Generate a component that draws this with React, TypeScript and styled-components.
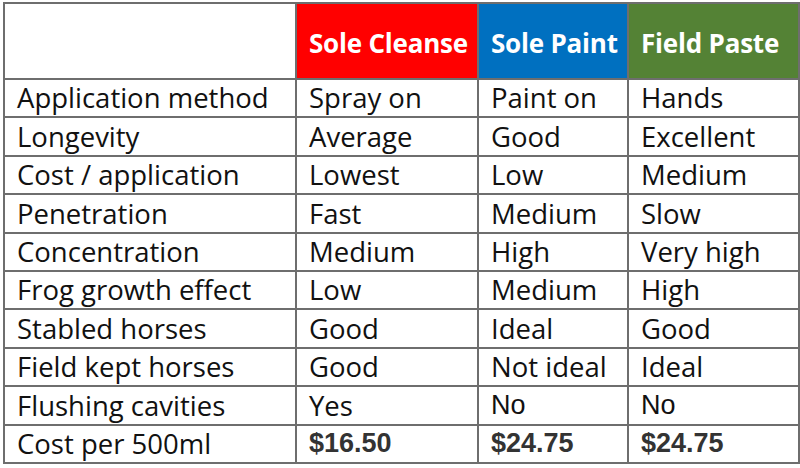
import React from "react";
import styled, { createGlobalStyle } from "styled-components";

const Global = createGlobalStyle`
  html, body { margin: 0; padding: 0; background: #ffffff; }
  body { font-family: "Open Sans", "Liberation Sans", sans-serif; }
`;

const Page = styled.div`
  padding: 2px 0 0 3px;
  width: 800px;
  height: 468px;
  box-sizing: border-box;
  background: #fff;
`;

const Table = styled.table`
  border-collapse: collapse;
  table-layout: fixed;
  width: 795px;
  border: 2px solid #6e6e6e;
`;

const Col = styled.col<{ $w: number }>`
  width: ${(p) => p.$w}px;
`;

const HeadCell = styled.th<{ $bg?: string }>`
  height: 76px;
  padding: 4px 0 0 12px;
  box-sizing: border-box;
  background: ${(p) => p.$bg || "#ffffff"};
  color: #ffffff;
  font-family: "Open Sans", "Liberation Sans", sans-serif;
  font-weight: 700;
  font-size: 26px;
  letter-spacing: -0.2px;
  line-height: 1;
  text-align: left;
  vertical-align: middle;
  white-space: nowrap;
  overflow: hidden;
  border: 2px solid #6e6e6e;
`;

const Cell = styled.td<{ $arial?: boolean; $price?: boolean }>`
  height: 36.4px;
  padding: 0 0 0 12px;
  font-family: ${(p) =>
    p.$arial || p.$price
      ? '"Liberation Sans", Arial, sans-serif'
      : '"Open Sans", "Liberation Sans", sans-serif'};
  font-weight: ${(p) => (p.$price ? 700 : 400)};
  font-size: ${(p) => (p.$price || p.$arial ? "27px" : "27.5px")};
  color: ${(p) => (p.$price ? "#333333" : "#111111")};
  line-height: 1;
  white-space: nowrap;
  overflow: hidden;
  border: 2px solid #6e6e6e;
  vertical-align: middle;
`;

type Row = { label: string; vals: string[]; price?: boolean };

const rows: Row[] = [
  { label: "Application method", vals: ["Spray on", "Paint on", "Hands"] },
  { label: "Longevity", vals: ["Average", "Good", "Excellent"] },
  { label: "Cost / application", vals: ["Lowest", "Low", "Medium"] },
  { label: "Penetration", vals: ["Fast", "Medium", "Slow"] },
  { label: "Concentration", vals: ["Medium", "High", "Very high"] },
  { label: "Frog growth effect", vals: ["Low", "Medium", "High"] },
  { label: "Stabled horses", vals: ["Good", "Ideal", "Good"] },
  { label: "Field kept horses", vals: ["Good", "Not ideal", "Ideal"] },
  { label: "Flushing cavities", vals: ["Yes", "No", "No"] },
  { label: "Cost per 500ml", vals: ["$16.50", "$24.75", "$24.75"], price: true },
];

export default function App() {
  return (
    <Page>
      <Global />
      <Table>
        <colgroup>
          <Col $w={292} />
          <Col $w={182} />
          <Col $w={150} />
          <Col $w={171} />
        </colgroup>
        <thead>
          <tr>
            <HeadCell />
            <HeadCell $bg="#ff0000">Sole Cleanse</HeadCell>
            <HeadCell $bg="#0070c0">Sole Paint</HeadCell>
            <HeadCell $bg="#548235">Field Paste</HeadCell>
          </tr>
        </thead>
        <tbody>
          {rows.map((r) => (
            <tr key={r.label}>
              <Cell>{r.label}</Cell>
              {r.vals.map((v, i) => (
                <Cell key={i} $price={r.price} $arial={v === "No"}>
                  {v}
                </Cell>
              ))}
            </tr>
          ))}
        </tbody>
      </Table>
    </Page>
  );
}
